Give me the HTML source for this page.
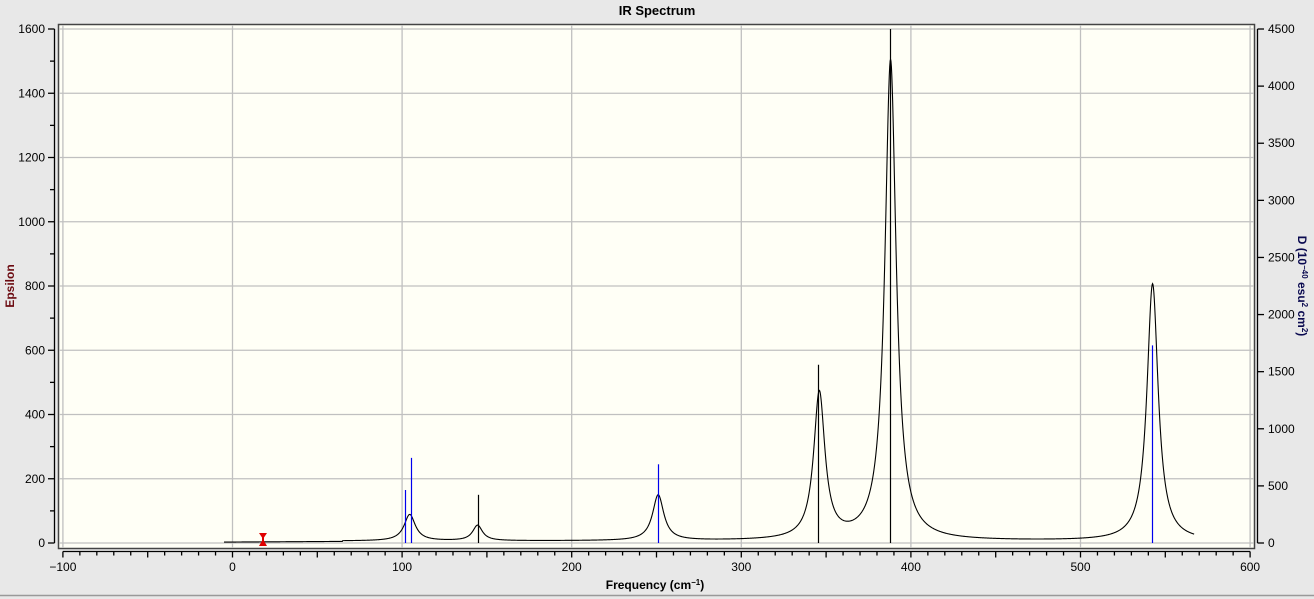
<!DOCTYPE html>
<html><head><meta charset="utf-8"><style>
html,body{margin:0;padding:0;background:#e8e8e8;}
svg{display:block;font-family:"Liberation Sans",sans-serif;}
</style></head><body>
<svg id="s" width="1314" height="599" xmlns="http://www.w3.org/2000/svg">
<rect x="0" y="0" width="1314" height="599" fill="#e8e8e8"/>
<line x1="0" y1="595.5" x2="1314" y2="595.5" stroke="#999" stroke-width="1.5"/>
<text x="657" y="15" font-size="13" font-weight="bold" text-anchor="middle">IR Spectrum</text>
<rect x="58.5" y="24.5" width="1196" height="524" fill="#fffff6" stroke="#444" stroke-width="1.5"/>
<g id="grid" stroke="#c0c0c0" stroke-width="1.3"></g>
<g id="axes" stroke="#000" stroke-width="1.3" fill="none"></g>
<g id="labels" font-size="12" fill="#000"></g>
<path id="curve" fill="none" stroke="#000" stroke-width="1.1"/>
<g id="sticks" stroke-width="1.2"></g>
<g fill="#e00000"><polygon points="259,533 267,533 263,539"/><polygon points="259,546 267,546 263,539"/><rect x="262" y="534" width="2" height="11"/></g>
<text x="655" y="589" font-size="12" font-weight="bold" text-anchor="middle">Frequency (cm<tspan dy="-4" font-size="8">−1</tspan><tspan dy="4">)</tspan></text>
<text transform="translate(14,286) rotate(-90)" font-size="12" font-weight="bold" fill="#6b0a10" text-anchor="middle">Epsilon</text>
<text transform="translate(1298,286) rotate(90)" font-size="12" font-weight="bold" fill="#0a0a50" text-anchor="middle">D (10<tspan dy="-4" font-size="8">−40</tspan><tspan dy="4"> esu</tspan><tspan dy="-4" font-size="8">2</tspan><tspan dy="4"> cm</tspan><tspan dy="-4" font-size="8">2</tspan><tspan dy="4">)</tspan></text>
</svg>
<script>
var NS="http://www.w3.org/2000/svg";
function px(f){return 232.5+1.696*f;}
function py(e){return 543-0.32125*e;}
function el(p,t,a,txt){var e=document.createElementNS(NS,t);for(var k in a)e.setAttribute(k,a[k]);if(txt!==undefined)e.textContent=txt;document.getElementById(p).appendChild(e);}
for(var f=-100;f<=600;f+=100){var x=px(f);el("grid","line",{x1:x,y1:25,x2:x,y2:548});}
for(var e=0;e<=1600;e+=200){var y=py(e);el("grid","line",{x1:59,y1:y,x2:1254,y2:y});}
el("axes","line",{x1:px(-100),y1:551.5,x2:px(600),y2:551.5});
for(var f=-100;f<=600;f+=10){var x=px(f);var L=(f%50==0)?6:4;el("axes","line",{x1:x,y1:551.5,x2:x,y2:551.5+L});}
for(var f=-100;f<=600;f+=100){el("labels","text",{x:px(f),y:571,"text-anchor":"middle"},f<0?"\u2212100":String(f));}
el("axes","line",{x1:54.5,y1:py(1600),x2:54.5,y2:py(0)});
for(var e=0;e<=1600;e+=100){var y=py(e);el("axes","line",{x1:54.5,y1:y,x2:(e%200==0)?48:50,y2:y});}
for(var e=0;e<=1600;e+=200){el("labels","text",{x:45,y:py(e)+4,"text-anchor":"end"},String(e));}
function pr(v){return 543-0.11422*v;}
el("axes","line",{x1:1257.5,y1:pr(4500),x2:1257.5,y2:pr(0)});
for(var v=0;v<=4500;v+=500){var y=pr(v);el("axes","line",{x1:1257.5,y1:y,x2:1264,y2:y});el("labels","text",{x:1268,y:y+4},String(v));}
var pk=[[104.5,82,4],[144.5,48,3.5],[251,142,4],[346,455,4],[388,1495,4],[542.5,800,4]];
var d="";
for(var f=-5;f<=567;f+=0.25){var s=6;for(var i=0;i<pk.length;i++){var g=pk[i][2],dx=f-pk[i][0];s+=pk[i][1]*g*g/(dx*dx+g*g);}
if(f<65)s=Math.min(s,3+f*0.03);
d+=(d?"L":"M")+px(f).toFixed(2)+","+py(s).toFixed(2);}
document.getElementById("curve").setAttribute("d",d);
var st=[[144.5,150,"#000"],[345.5,555,"#000"],[387.5,1600,"#000"],[102,165,"#0000ee"],[105.5,265,"#0000ee"],[251,245,"#0000ee"],[542,615,"#0000ee"]];
for(var i=0;i<st.length;i++){var x=Math.round(px(st[i][0]))+0.5;el("sticks","line",{x1:x,y1:py(0),x2:x,y2:py(st[i][1]),stroke:st[i][2]});}
</script>
</body></html>
